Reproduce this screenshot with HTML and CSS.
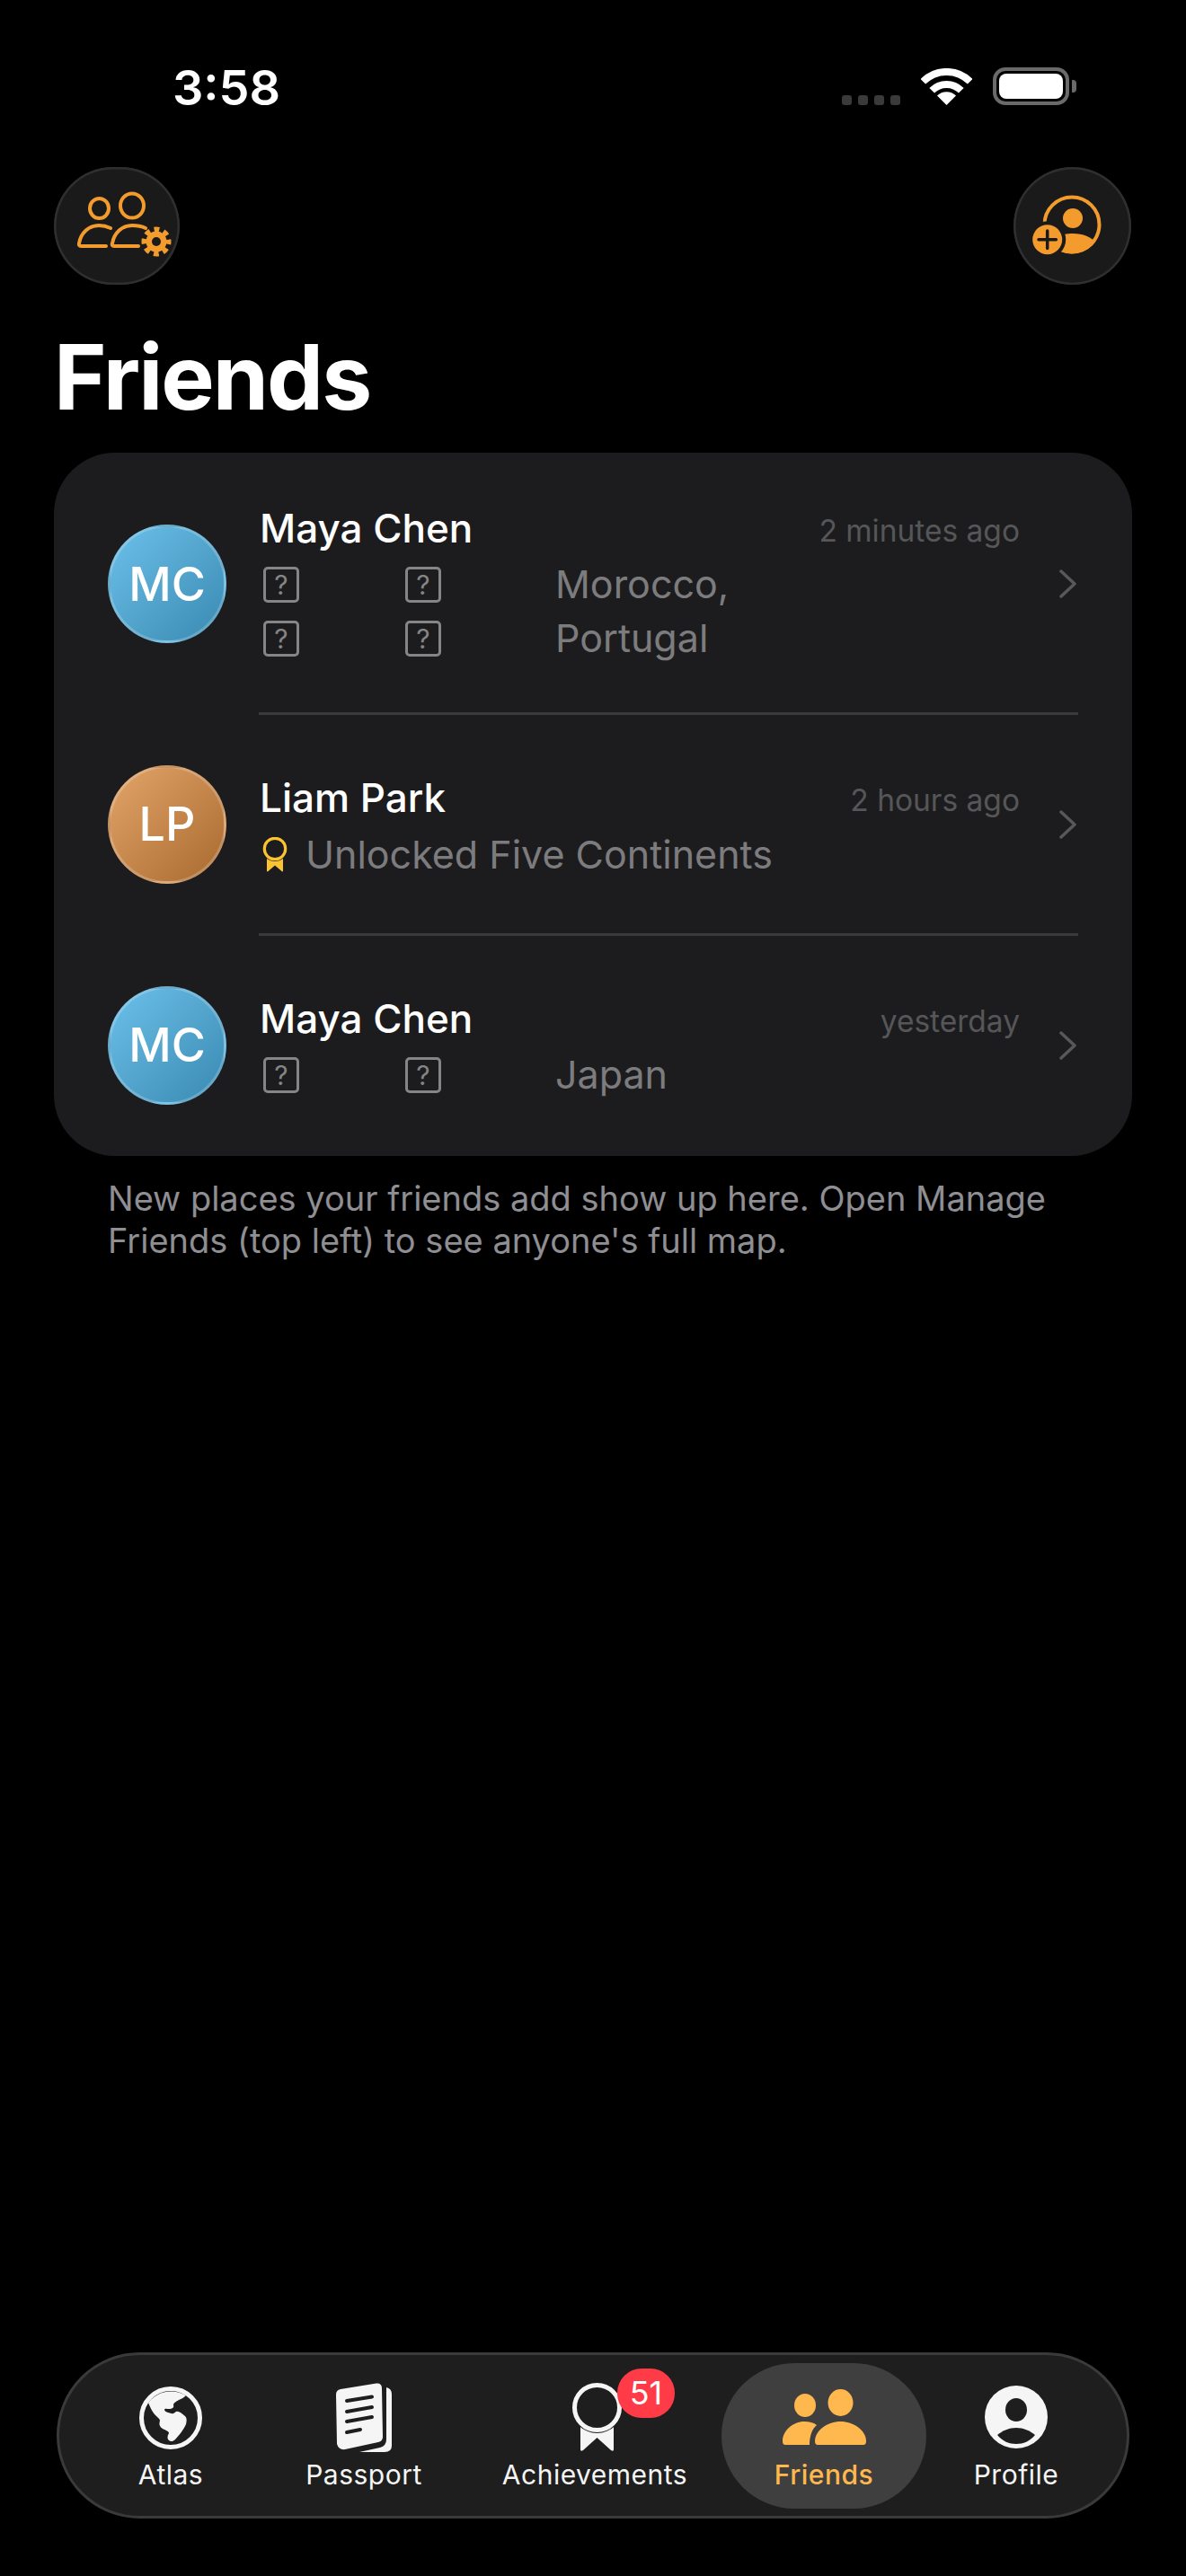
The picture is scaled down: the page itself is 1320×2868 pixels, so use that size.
FILE: index.html
```html
<!DOCTYPE html>
<html lang="en">
<head>
  <meta charset="UTF-8">
  <meta name="viewport" content="width=device-width, initial-scale=1.0">
  <link rel="stylesheet" href="styles.css">
  <title>Friends</title>
</head>
<body>
  <div class="status">
    <span class="time">3:58</span>
    <div class="status-icons">
      <div class="signal"><i></i><i></i><i></i><i></i></div>
      <svg class="wifi" width="57" height="41" viewBox="0 0 57 41">
        <path d="M2.3 14.8A37 37 0 0 1 54.7 14.8" fill="none" stroke="#fff" stroke-width="8"/>
        <path d="M12.2 24.7A23 23 0 0 1 44.8 24.7" fill="none" stroke="#fff" stroke-width="8"/>
        <path d="M28.5 41L18 30.5A14.8 14.8 0 0 1 39 30.5Z" fill="#fff"/>
      </svg>
      <div class="battery"><div class="battery-fill"></div></div>
      <div class="battery-cap"></div>
    </div>
  </div>

  <div class="top-buttons">
    <button class="round-btn manage">
      <svg width="140" height="131" viewBox="0 0 140 131" fill="none" stroke="#f49b2e" stroke-width="4">
        <ellipse cx="50.5" cy="46" rx="10.5" ry="11"/>
        <ellipse cx="87" cy="43" rx="13" ry="13.5"/>
        <path d="M58 88H30Q27.500 88 28 85C30 73 39 65 50 65C55 65 59 66 63 68" stroke-linecap="round"/>
        <path d="M94 88H67Q64 88 65 85C67 73 76 65 87 65C93 65 98 66 102 68" stroke-linecap="round"/>
        <circle cx="114" cy="83" r="11.500" fill="#f49b2e" stroke="none"/>
        <circle cx="114" cy="83" r="13" stroke-width="7" stroke-dasharray="5.500 4.710" stroke-dashoffset="2.750"/>
        <circle cx="114" cy="83" r="5" fill="#1a1a1a" stroke="none"/>
      </svg>
    </button>
    <button class="round-btn add">
      <svg width="131" height="131" viewBox="0 0 131 131">
        <defs>
          <clipPath id="ringClip"><circle cx="65" cy="64" r="32.500"/></clipPath>
        </defs>
        <circle cx="65" cy="64" r="30.500" fill="none" stroke="#f49b2e" stroke-width="4"/>
        <circle cx="66" cy="57" r="11" fill="#f49b2e"/>
        <path d="M30 100C38 80 52 74 66 74C78 74 86 78 92 84L100 100Z" fill="#f49b2e" clip-path="url(#ringClip)"/>
        <circle cx="37.700" cy="80.700" r="20.500" fill="#1a1a1a"/>
        <circle cx="37.700" cy="80.700" r="16.500" fill="#f49b2e"/>
        <path d="M28 80.700H47.400M37.700 71V90.400" stroke="#1a1a1a" stroke-width="3.500" stroke-linecap="round"/>
      </svg>
    </button>
  </div>

  <h1 class="title">Friends</h1>

  <div class="card">
    <div class="row row-first">
      <div class="avatar blue">MC</div>
      <div class="row-main">
        <div class="row-head">
          <span class="name">Maya Chen</span>
          <span class="ago">2 minutes ago</span>
        </div>
        <div class="row-sub">
          <div class="flags">
            <span class="tofu">?</span><span class="tofu">?</span>
            <span class="tofu">?</span><span class="tofu">?</span>
          </div>
          <span class="places">Morocco,<br>Portugal</span>
        </div>
      </div>
      <svg class="chevron" width="21" height="32" viewBox="0 0 21 32"><path d="M3 2L18 16L3 30" fill="none" stroke="#58585a" stroke-width="3.500" stroke-linecap="round" stroke-linejoin="round"/></svg>
    </div>
    <div class="divider"></div>

    <div class="row">
      <div class="avatar orange">LP</div>
      <div class="row-main">
        <div class="row-head">
          <span class="name">Liam Park</span>
          <span class="ago">2 hours ago</span>
        </div>
        <div class="row-sub achievement">
          <svg class="medal" width="28" height="39" viewBox="0 0 28 39">
            <path d="M5 20V37.500Q5 39 6.500 38L14 31.500L21.500 38Q23 39 23 37.500V20Z" fill="#f9c332"/>
            <circle cx="14" cy="13" r="14" fill="#1c1c1e"/>
            <circle cx="14" cy="13" r="11.700" fill="none" stroke="#f9c332" stroke-width="3.200"/>
          </svg>
          <span class="places">Unlocked Five Continents</span>
        </div>
      </div>
      <svg class="chevron" width="21" height="32" viewBox="0 0 21 32"><path d="M3 2L18 16L3 30" fill="none" stroke="#58585a" stroke-width="3.500" stroke-linecap="round" stroke-linejoin="round"/></svg>
    </div>
    <div class="divider"></div>

    <div class="row">
      <div class="avatar blue">MC</div>
      <div class="row-main">
        <div class="row-head">
          <span class="name">Maya Chen</span>
          <span class="ago">yesterday</span>
        </div>
        <div class="row-sub">
          <div class="flags">
            <span class="tofu">?</span><span class="tofu">?</span>
          </div>
          <span class="places">Japan</span>
        </div>
      </div>
      <svg class="chevron" width="21" height="32" viewBox="0 0 21 32"><path d="M3 2L18 16L3 30" fill="none" stroke="#58585a" stroke-width="3.500" stroke-linecap="round" stroke-linejoin="round"/></svg>
    </div>
  </div>

  <p class="note">New places your friends add show up here. Open Manage Friends (top left) to see anyone's full map.</p>

  <nav class="tabbar">
    <div class="tab tab-atlas">
      <svg width="70" height="70" viewBox="0 0 70 70">
        <circle cx="35" cy="35" r="32.500" fill="none" stroke="#f5f5f5" stroke-width="5"/>
        <path d="M10 18C13 25 15 29 18 32C21 35 23 36 23 38C22 42 22 44 26 47C30 49 33 50 33 52C31 55 31 58 33 60C35 62 38 61 40 59C44 55 50 47 52 42C53 38 53 35 51 33C47 30 44 27 41 28C39 29 38 31 36 30C33 29 29 29 28 26C28 24 31 25 34 25C37 25 39 23 38 21C38 18 41 17 44 15C47 14 50 12 52 10A32 32 0 0 0 10 18Z" fill="#f5f5f5"/>
      </svg>
      <span>Atlas</span>
    </div>
    <div class="tab tab-passport">
      <svg width="62" height="77" viewBox="0 0 62 77" fill="#f5f5f5">
        <path d="M0 13Q0 8 5 7L45 0.500Q51 0 51 6L52 60Q52 65 47 66L10 74Q3 75 1 68Z"/>
        <path d="M56 5Q62 6 62 13V70Q62 77 54 77H26L49 72Q56 70 56 63Z"/>
        <path d="M12 20L40 15.500M12 32L40 27M12 43L40 38M12 55L27 52" stroke="#1e1e1e" stroke-width="4" stroke-linecap="round" fill="none"/>
      </svg>
      <span>Passport</span>
    </div>
    <div class="tab tab-achievements">
      <svg width="55" height="77" viewBox="0 0 55 77">
        <path d="M9 44V74Q9 77 12 75L27.500 61L43 75Q46 77 46 74V44Z" fill="#f5f5f5"/>
        <circle cx="27.500" cy="27.500" r="28.500" fill="#1e1e1e"/>
        <circle cx="27.500" cy="27.500" r="25" fill="none" stroke="#f5f5f5" stroke-width="5"/>
      </svg>
      <span>Achievements</span>
      <div class="badge">51</div>
    </div>
    <div class="tab tab-friends active">
      <svg width="93" height="62" viewBox="0 0 93 62" fill="#ffb84d">
        <ellipse cx="25" cy="18" rx="12" ry="13"/>
        <ellipse cx="64.500" cy="15" rx="14" ry="15"/>
        <path d="M3 62Q0 62 0 58C0 46 12 36 24 36C30 36 34 37 38 40C33 44 30 52 30 62Z"/>
        <path d="M39 62Q36 62 36 58C36 46 50 36 64.500 36C79 36 93 46 93 58Q93 62 90 62Z"/>
      </svg>
      <span>Friends</span>
    </div>
    <div class="tab tab-profile">
      <svg width="70" height="70" viewBox="0 0 70 70">
        <circle cx="35" cy="35" r="35" fill="#f5f5f5"/>
        <ellipse cx="35" cy="27" rx="12" ry="13" fill="#1e1e1e"/>
        <path d="M14 55C20 50 27 47 35 47C43 47 50 50 56 55C50 62 43 65 35 65C27 65 20 62 14 55Z" fill="#1e1e1e"/>
      </svg>
      <span>Profile</span>
    </div>
  </nav>
</body>
</html>
```

FILE: styles.css
```css
* {
  box-sizing: border-box;
}
body {
  margin: 0;
  min-height: 2868px;
  background: #000;
  color: #fff;
  font-family: Inter, "Liberation Sans", sans-serif;
  display: flex;
  flex-direction: column;
}

/* status bar */
.status {
  height: 186px;
  display: flex;
  justify-content: space-between;
  align-items: flex-start;
  padding: 75px 122px 0 192px;
}
.time {
  font-size: 54px;
  font-weight: 600;
  line-height: 46px;
}
.status-icons {
  display: flex;
  align-items: flex-start;
}
.signal {
  display: flex;
  gap: 7px;
  margin-top: 31px;
  margin-right: 23px;
}
.signal i {
  width: 11px;
  height: 11px;
  border-radius: 3px;
  background: #3a3a3a;
}
.wifi {
  margin-top: 1px;
  margin-right: 23px;
}
.battery {
  width: 85px;
  height: 42px;
  border: 4px solid #6a6a6a;
  border-radius: 14px;
  padding: 3px;
}
.battery-fill {
  height: 100%;
  background: #fff;
  border-radius: 8px;
}
.battery-cap {
  width: 5px;
  height: 14px;
  margin: 14px 0 0 3px;
  background: #6a6a6a;
  border-radius: 0 4px 4px 0;
}

/* top buttons */
.top-buttons {
  display: flex;
  justify-content: space-between;
  padding: 0 61px 0 60px;
}
.round-btn {
  padding: 0;
  height: 131px;
  background: #1a1a1a;
  border: 0;
  border-radius: 66px;
  box-shadow: inset 0 0 0 2.5px #2f2f2f;
  display: block;
}
.round-btn svg {
  display: block;
}
.manage {
  width: 140px;
}
.add {
  width: 131px;
}

.title {
  margin: 0;
  padding-left: 60px;
  height: 187px;
  font-size: 100px;
  font-weight: 700;
  letter-spacing: -2px;
  line-height: 112px;
  padding-top: 47px;
}

/* list card */
.card {
  margin: 0 60px;
  background: #1c1c1e;
  border-radius: 68px;
  padding-bottom: 2px;
}
.row {
  display: flex;
  align-items: center;
  padding: 0 61px 0 60px;
  height: 243px;
}
.row-first {
  height: 289px;
}
.avatar {
  width: 132px;
  height: 132px;
  flex: none;
  border-radius: 50%;
  display: flex;
  align-items: center;
  justify-content: center;
  font-size: 52px;
  font-weight: 500;
  border: 3px solid rgba(255, 255, 255, 0.2);
}
.row-first .avatar,
.row-first .chevron {
  margin-top: 3px;
}
.blue {
  background: linear-gradient(135deg, #6cc0e9, #3a8ab2);
}
.orange {
  background: linear-gradient(135deg, #e3a469, #a96a30);
}
.row-main {
  flex: 1;
  align-self: flex-start;
  margin-left: 37px;
  padding-top: 66px;
}
.row-first .row-main {
  padding-top: 58px;
}
.row-head {
  display: flex;
  justify-content: space-between;
  align-items: center;
  height: 52px;
}
.name {
  font-size: 44px;
  font-weight: 550;
  line-height: 52px;
}
.ago {
  font-size: 33.500px;
  color: #565658;
  line-height: 44px;
  padding-top: 6px;
}
.row-sub {
  display: flex;
  margin-top: 7px;
  padding-left: 4px;
  height: 60px;
  font-size: 43px;
}
.row-first .row-sub {
  height: 120px;
}
.flags {
  width: 325px;
  flex: none;
  display: flex;
  flex-wrap: wrap;
  align-content: flex-start;
}
.tofu {
  width: 40px;
  height: 40px;
  margin: 10px 118px 10px 0;
  border: 3px solid #858585;
  border-radius: 5px;
  color: #858585;
  font-size: 30px;
  line-height: 34px;
  text-align: center;
}
.places {
  color: #7c7c7e;
  line-height: 60px;
  margin-top: -1px;
}
.achievement {
  align-items: center;
  padding-left: 3px;
}
.achievement .places {
  margin-top: 0;
}
.medal {
  flex: none;
  margin-right: 20px;
}
.chevron {
  flex: none;
  margin-left: 43px;
}
.divider {
  height: 3px;
  margin: 0 60px 0 228px;
  background: #3a3a3c;
}

.note {
  margin: 24px 0 0;
  padding: 0 120px;
  font-size: 38px;
  line-height: 47px;
  color: #8e8e93;
}

/* bottom tabs */
.tabbar {
  margin: auto 63px 64px;
  height: 185px;
  background: #1e1e1e;
  border: 3px solid #3a3a3a;
  border-radius: 93px;
  display: flex;
  align-items: stretch;
  padding: 9px 0;
}
.tab {
  position: relative;
  display: flex;
  flex-direction: column;
  align-items: center;
  justify-content: flex-end;
  padding-bottom: 19px;
  font-size: 30px;
  letter-spacing: 0.5px;
  color: #f5f5f5;
  height: 162px;
}
.tab svg {
  position: absolute;
}
.tab span {
  line-height: 38px;
}
.tab-atlas {
  width: 130px;
  margin-left: 59px;
}
.tab-atlas svg {
  top: 26px;
}
.tab-passport {
  width: 170px;
  margin-left: 65px;
}
.tab-passport svg {
  top: 22px;
}
.tab-achievements {
  width: 228px;
  margin-left: 58px;
}
.tab-achievements svg {
  top: 22px;
  left: 89px;
}
.tab-friends {
  width: 228px;
  margin-left: 27px;
}
.tab-friends svg {
  top: 29px;
}
.tab-profile {
  width: 130px;
  margin-left: 35px;
}
.tab-profile svg {
  top: 25px;
}
.active {
  background: #3f3f3f;
  border-radius: 81px;
  color: #ffb84d;
  font-weight: 500;
}
.badge {
  position: absolute;
  left: 139px;
  top: 6px;
  width: 64px;
  height: 55px;
  background: #ff3b47;
  border-radius: 27px;
  color: #fff;
  font-size: 36px;
  letter-spacing: 0;
  line-height: 55px;
  text-align: center;
}
```
